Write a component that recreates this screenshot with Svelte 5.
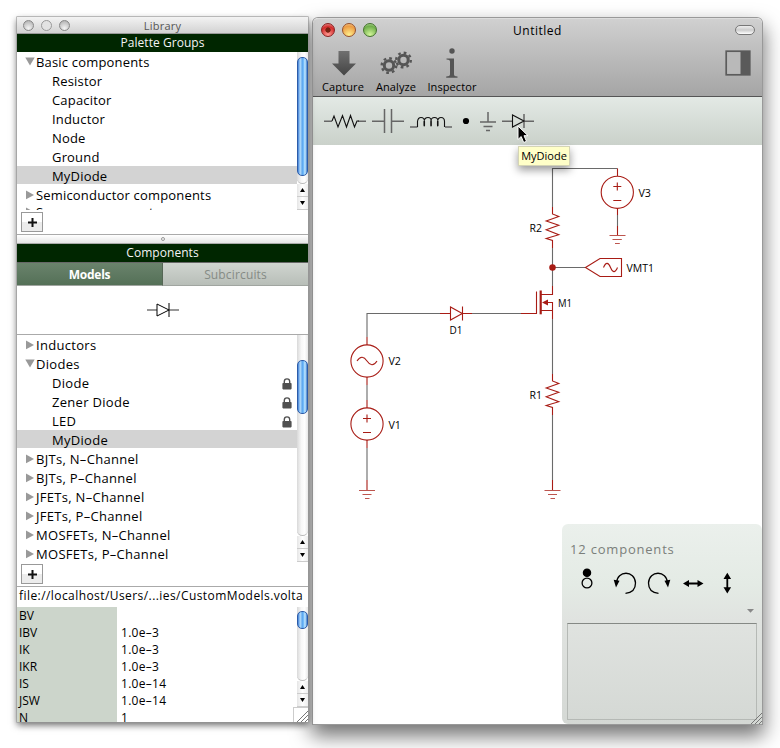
<script>
  const groups = [
    { name: 'Basic components', open: true },
    { name: 'Resistor', child: true },
    { name: 'Capacitor', child: true },
    { name: 'Inductor', child: true },
    { name: 'Node', child: true },
    { name: 'Ground', child: true },
    { name: 'MyDiode', child: true, selected: true },
    { name: 'Semiconductor components' },
    { name: 'Source components', peek: true }
  ];
  const models = [
    { name: 'Inductors' },
    { name: 'Diodes', open: true },
    { name: 'Diode', child: true, locked: true },
    { name: 'Zener Diode', child: true, locked: true },
    { name: 'LED', child: true, locked: true },
    { name: 'MyDiode', child: true, selected: true },
    { name: 'BJTs, N–Channel' },
    { name: 'BJTs, P–Channel' },
    { name: 'JFETs, N–Channel' },
    { name: 'JFETs, P–Channel' },
    { name: 'MOSFETs, N–Channel' },
    { name: 'MOSFETs, P–Channel' }
  ];
  const params = [
    ['BV', ''],
    ['IBV', '1.0e–3'],
    ['IK', '1.0e–3'],
    ['IKR', '1.0e–3'],
    ['IS', '1.0e–14'],
    ['JSW', '1.0e–14'],
    ['N', '1']
  ];
  const labels = [
    ['V3', 638.5, 197, 12.5],
    ['R2', 529.5, 232, 12.5],
    ['VMT1', 626.5, 272, 27.5],
    ['M1', 558, 307, 14],
    ['D1', 449.5, 334, 13],
    ['V2', 388.5, 365, 12.5],
    ['V1', 388.5, 429, 12.5],
    ['R1', 529.5, 399, 12.5]
  ];
</script>

{#snippet tree(rows)}
  <div class="rows">
    {#each rows as r}
      <div class="row" class:child={r.child} class:selected={r.selected} class:peek={r.peek}>
        {#if !r.child}
          <svg class="tri" width="10" height="10" viewBox="0 0 10 10">
            <path d={r.open ? 'M.3 .5H9.7L5 8.500z' : 'M1 .5V9.300L9 4.900z'} fill="#999" />
          </svg>
        {/if}
        <span>{r.name}</span>
        {#if r.locked}
          <svg class="lock" width="10" height="12" viewBox="0 0 10 12">
            <path d="M2.3 6V3.6a2.7 2.7 0 0 1 5.4 0V6" fill="none" stroke="#505050" stroke-width="1.4" />
            <rect x=".4" y="5" width="9.2" height="6.4" rx=".8" fill="#505050" />
          </svg>
        {/if}
      </div>
    {/each}
  </div>
{/snippet}

{#snippet scroller(top, height)}
  <div class="scroll">
    <div class="track">
      <div class="thumb" style="margin-top:{top}px;height:{height}px"></div>
    </div>
    <div class="arrow"><svg width="5" height="4"><path d="M0 4H5L2.5 0z" /></svg></div>
    <div class="arrow"><svg width="5" height="4"><path d="M0 0H5L2.5 4z" /></svg></div>
  </div>
{/snippet}

{#snippet plus()}
  <button aria-label="Add"><svg width="9" height="9" viewBox="0 0 9 9"><path d="M0 4.500H9M4.500 0V9" stroke="#111" stroke-width="2" /></svg></button>
{/snippet}

{#snippet grip()}
  <svg class="grip" width="12" height="12" viewBox="0 0 12 12" stroke="#777">
    <path d="M1 12L12 1M5 12L12 5M9 12L12 9" />
  </svg>
{/snippet}

<div class="desk">
  <section class="library">
    <div class="ltitle">
      <div class="dots"><i></i><i class="dim"></i><i></i></div>
      <span>Library</span>
    </div>
    <div class="head">Palette Groups</div>
    <div class="pane groups">{@render tree(groups)}{@render scroller(5, 119)}</div>
    <div class="foot">{@render plus()}</div>
    <div class="split"><i></i></div>
    <div class="head">Components</div>
    <div class="tabs">
      <div class="tab on">Models</div>
      <div class="tab">Subcircuits</div>
    </div>
    <div class="preview">
      <svg width="32" height="14" viewBox="0 0 32 14" fill="none">
        <path d="M0 7H10M22 7H32" stroke="#777" stroke-width="1.6" />
        <path d="M10 1V13L22 7z" stroke="#000" /><path d="M22 0V14" stroke="#000" />
      </svg>
    </div>
    <div class="pane models">{@render tree(models)}{@render scroller(25, 54)}</div>
    <div class="foot">{@render plus()}</div>
    <div class="path">file://localhost/Users/...ies/CustomModels.volta</div>
    <div class="pane params">
      <div class="table">
        {#each params as [k, v]}
          <div class="prow"><span class="key">{k}</span><span class="val">{v}</span></div>
        {/each}
      </div>
      <div class="pscroll">
        {@render scroller(4, 18)}
        <div class="corner">{@render grip()}</div>
      </div>
    </div>
  </section>

  <section class="main">
    <header>
      <div class="mtitle">
        <div class="lights"><i class="red"></i><i class="amber"></i><i class="green"></i></div>
        <span class="name">Untitled</span>
        <b class="pill"></b>
      </div>
      <div class="tools">
        <div class="tool capture">
          <svg width="26" height="32" viewBox="0 0 26 32"><defs><linearGradient id="g" x1="0" y1="0" x2="0" y2="1"><stop offset="0" stop-color="#707070" /><stop offset="1" stop-color="#444" /></linearGradient></defs>
            <path d="M8.500 5H19.500V17.500H26L14 29.500L2 17.500H8.500z" fill="url(#g)" /></svg>
          <span>Capture</span>
        </div>
        <div class="tool analyze">
          <svg width="34" height="32" viewBox="0 0 34 32" fill="none" stroke="#555">
            <circle cx="10" cy="19.5" r="4.7" stroke-width="3" />
            <circle cx="10" cy="19.5" r="7.3" stroke-width="2.4" stroke-dasharray="2.7 3.03" />
            <circle cx="24.500" cy="14" r="4.7" stroke-width="3" />
            <circle cx="24.500" cy="14" r="7.3" stroke-width="2.4" stroke-dasharray="2.7 3.03" />
          </svg>
          <span>Analyze</span>
        </div>
        <div class="tool inspect">
          <svg width="14" height="32" viewBox="0 0 14 32" fill="#555">
            <circle cx="7" cy="5" r="2.700" />
            <path d="M1.500 12.500H9V28.500Q9 30.300 12.500 30.500V31.800H1.200V30.500Q5 30.300 5 28.500V15.500Q5 13.800 1.500 13.600z" />
          </svg>
          <span>Inspector</span>
        </div>
        <svg class="side" width="26" height="26" viewBox="0 0 26 26">
          <rect x="1.2" y="1.2" width="23.6" height="23.6" fill="#b9b9b9" stroke="#5c5c5c" stroke-width="1.7" /><path d="M15.5 1H25V25H15.5z" fill="#5a5a5a" />
        </svg>
      </div>
    </header>
    <div class="palette">
      <svg width="449" height="48" viewBox="313 97 449 48" fill="none" stroke="#666" stroke-width="1.5">
        <path d="M324 121.2H332M358 121.2H366" />
        <path d="M332 121L334 116L338 127L342.5 115.5L346.5 127L350.5 115.5L354.5 127L357 121H359" stroke="#111" stroke-width="1.1" />
        <path d="M372 121.2H384.5M391.5 121.2H404M384.5 109V133M391.5 109V133" />
        <path d="M410 127H417.500M445 127H452" />
        <path d="M417.500 127V121.500Q418 117.500 421 117.500Q424.500 117.500 424.500 121.500V125.500Q424 126.500 424 125V121.500Q424.500 117.500 428 117.500Q431.300 117.500 431.300 121.500V125.500Q430.800 126.500 430.800 125V121.500Q431 117.500 434.500 117.500Q438 117.500 438 121.500V125.500Q437.500 126.500 437.500 125V121.500Q438 117.500 441 117.500Q444.500 117.500 444.500 121.500V127" stroke="#111" stroke-width="1.100" />
        <circle cx="466" cy="121" r="3.1" fill="#000" stroke="none" />
        <path d="M488 112V122M480 122H496M483.500 126.500H492.500M486 130.500H490" />
        <path d="M502 121.200H512M524 121.200H534M524 114V128" />
        <path d="M512.500 115V127L524 121z" stroke="#111" stroke-width="1.100" />
      </svg>
    </div>
    <div class="canvas">
      <svg width="449" height="579" viewBox="313 145 449 579" fill="none" stroke="#a81c15" stroke-width="1.1">
        <path stroke="#6a6a6a" d="M552.500 207V168.500H617.500M617.500 215V226M552.500 248V286M552.500 267.500H585M552.500 319V374M552.500 415V480M472 313.500H521M441 313.500H367V337M367 385V400M367 448V480" />
        <path d="M552.500 207V214L558.800 216.500L546.200 221L558.800 225.300L546.200 229.700L558.800 234.700L546.200 238.500L552.500 240.500V248" />
        <path d="M552.500 374V381L558.800 383.500L546.200 388L558.800 392.300L546.200 396.700L558.800 401.700L546.200 405.500L552.500 407.500V415" />
        <circle cx="552.500" cy="267.500" r="2.700" fill="#a81c15" />
        <path d="M585.500 267.500L600 258.500H621.500V276.500H600zM603.500 267.500C606 261.500 608.500 262.500 610.500 267.500S615 273.500 617.500 267.500" />
        <circle cx="617.300" cy="192.300" r="16.100" /><circle cx="367" cy="361" r="16.100" /><circle cx="367" cy="424" r="16.100" />
        <path d="M617.500 168.500V176M617.500 208V215M617.500 226V235M613.300 186.500H621.300M617.300 182.500V190.500M613.300 200.500H621.300" />
        <path d="M367 337V345M367 377V385M367 400V408M367 440V448M367 480V490M363 418.500H371M367 414.500V422.500M363 432.500H371M552.500 480V490" />
        <path d="M357 361C360.500 355.500 364 356.500 367 361S373.500 366.500 377 361" />
        <g stroke="#bd554e">
          <path d="M609.500 235.500H625.500M612.500 239.500H621.800M615 243.500H619.800M359 490.500H375M362.500 494.500H371.500M365 498.500H369.500M544.500 490.500H560.500M548 494.500H557M550.500 498.500H555" />
        </g>
        <path d="M440 313.500H450M462 313.500H472M450.500 307V320L462.300 313.500zM462.500 306.500V320.500" />
        <path d="M521 313.500H536.500V291.500M540 294.500H552.500V286M540 310.500H552.500M547 302.500H552.500V319" />
        <path d="M540.700 290.500V314.300" stroke-width="2.200" />
        <path d="M542 302.500L548 299.500V305.500z" fill="#a81c15" stroke="none" />
        {#each labels as [t, x, y, w]}
          <text {x} {y} textLength={w} lengthAdjust="spacingAndGlyphs">{t}</text>
        {/each}
      </svg>
      <div class="panel">
        <div class="count">12 components</div>
        <svg width="200" height="58" viewBox="562 564 200 58" fill="none" stroke="#000" stroke-width="1.300">
          <circle cx="587" cy="572.700" r="3.600" fill="#000" /><circle cx="587" cy="583" r="4.900" />
          <path d="M616.500 583C617 570 635 570 635.500 583Q635.500 592.500 625.500 593.300" />
          <path d="M613.700 579.800L619.500 580.800L616 587.500z" fill="#000" stroke="none" />
          <path d="M667.500 583C667 570 649 570 648.500 583Q648.500 592.500 658.500 593.300" />
          <path d="M670.300 579.800L664.500 580.800L668 587.500z" fill="#000" stroke="none" />
          <path d="M687 583.500H699M727.300 577V589" stroke-width="1.800" />
          <path d="M683 583.500L689 580V587zM703.500 583.500L697.500 580V587zM727.300 572.700L723.500 579H731.100zM727.300 593.500L723.500 587.200H731.100z" fill="#000" stroke="none" />
          <path d="M747 609H754L750.500 612.800z" fill="#888" stroke="none" />
        </svg>
        <div class="well"></div>
        {@render grip()}
      </div>
    </div>
  </section>

  <div class="tip">MyDiode</div>
  <svg class="cursor" width="14" height="20" viewBox="0 0 14 20"><path d="M1 1V14.500L4.200 11.500L6.700 17.500L9.500 16.300L7 10.700H11z" fill="#000" stroke="#fff" /></svg>
</div>

<style>
  :global(body) { background: #fff; overflow: hidden; }
  .desk { position: relative; width: 780px; height: 748px; overflow: hidden; background: #fff; font: 500 13px/18px 'Open Sans', 'Noto Sans', sans-serif; color: #000; }
  .desk *, .desk { box-sizing: border-box; }
  .library { position: absolute; left: 17px; top: 17px; width: 291px; height: 705px; background: #fff; display: flex; flex-direction: column; box-shadow: 0 0 0 .6px #999, 0 3px 7px rgba(0,0,0,.6); z-index: 1; }
  .library > * { flex: none; }
  .ltitle { height: 17px; display: grid; place-items: center; background: linear-gradient(#f3f3f3, #d2d2d2); border-bottom: 1px solid #999; font-size: 11px; line-height: 15px; color: #555; letter-spacing: .2px; }
  .ltitle > * { grid-area: 1 / 1; }
  .ltitle span { padding-top: 1px; }
  .dots { justify-self: start; display: flex; gap: 7px; padding-left: 6px; }
  .dots i { width: 11px; height: 11px; border-radius: 50%; border: 1.5px solid #888; background: radial-gradient(circle at 50% 80%, #f4f4f4, #aaa); }
  .dots .dim { background: #e2e2e2; border: 1px solid #999; }
  .head { height: 18px; background: #002600; color: #f4f4f4; text-align: center; font-size: 12px; line-height: 18px; letter-spacing: .05px; }
  .pane { display: flex; overflow: hidden; }
  .groups { height: 158px; }
  .models { height: 227px; }
  .rows, .table { flex: 1; overflow: hidden; }
  .row { display: flex; align-items: center; height: 18px; margin-bottom: 1px; padding-left: 8px; letter-spacing: .18px; white-space: pre; line-height: 20px; }
  .models .row { letter-spacing: .3px; }
  .row span { flex: 1; padding-top: 2px; }
  .peek { margin-top: -2px; }
  .child { padding-left: 35px; }
  .selected { background: #d3d3d3; }
  .tri { margin: 2px 1px 0 0; }
  .lock { margin: 3px 5px 0 0; }
  .scroll { width: 11px; display: flex; flex-direction: column; flex: 1; }
  .groups > :global(.scroll), .models > :global(.scroll) { flex: none; }
  .track { flex: 1; display: flow-root; background: linear-gradient(90deg, #d9d9d9, #f8f8f8 40%, #fff 70%, #e8e8e8); border-radius: 0 0 6px 6px; border-bottom: 1px solid #bbb; }
  .thumb { border-radius: 5px; border: 1px solid #2d5ca8; background: linear-gradient(90deg, #3f80d8, #b5dcfa 25%, #5ca6ee 48%, #6eb9fa 60%, #c5e9ff 78%, #4080d0); }
  .arrow { height: 13px; display: grid; place-items: center; border-bottom: 1px solid #ccc; background: linear-gradient(90deg, #e5e5e5, #fff, #eee); }
  .foot { height: 25px; padding: 2px 0 0 4px; border-bottom: 1px solid #aaa; }
  button { display: grid; place-items: center; width: 22px; height: 20px; padding: 0; border: 1px solid #999; background: linear-gradient(#fff 50%, #ececec 50%); }
  button svg { display: block; }
  .split { height: 9px; background: linear-gradient(#fff, #e6e6e6); display: grid; place-items: center; border-bottom: 1px solid #aaa; }
  .split i { width: 4px; height: 4px; border-radius: 50%; border: 1px solid #999; }
  .tabs { display: flex; height: 24px; border-top: 1px solid #666; }
  .tab { flex: 1; text-align: center; line-height: 24px; font-size: 12px; letter-spacing: .15px; color: #858b85; background: linear-gradient(#d0d5d0, #b8beb8); border-bottom: 1px solid #a0a5a0; }
  .tab.on { color: #fff; font-weight: 700; letter-spacing: -.25px; background: linear-gradient(#6a836c, #547057); border-right: 1px solid #556655; }
  .preview { height: 49px; display: grid; place-items: center; border-bottom: 1px solid #aaa; }
  .path { height: 20px; font-size: 12px; line-height: 18px; padding-left: 2px; white-space: nowrap; letter-spacing: .43px; }
  .params { height: 115px; }
  .prow { display: flex; height: 17px; font-size: 12px; line-height: 18px; }
  .key { width: 100px; padding-left: 2px; background: #ccd5cb; }
  .val { padding-left: 4px; letter-spacing: .3px; }
  .pscroll { width: 11px; display: flex; flex-direction: column; }
  .corner { height: 15px; width: 15px; margin-left: -4px; display: grid; place-items: end; background: #fff; border: 1px solid #ccc; border-width: 1px 0 0 1px; }

  .main { position: absolute; left: 313px; top: 18px; width: 449px; height: 706px; border-radius: 5px 5px 0 0; background: #fff; display: flex; flex-direction: column; box-shadow: 0 0 0 1px #999, 0 10px 20px 2px rgba(0,0,0,.55); }
  header { height: 79px; border-radius: 5px 5px 0 0; background: linear-gradient(#d0d0d0, #a5a5a5); border-top: 1px solid #ddd; border-bottom: 1px solid #555; }
  .mtitle { display: grid; height: 22px; place-items: center; grid-template-columns: 1fr; font-size: 12px; }
  .mtitle > * { grid-area: 1 / 1; }
  .name { padding-top: 1px; letter-spacing: .5px; }
  .lights { justify-self: start; display: flex; gap: 7px; padding-left: 8px; }
  .lights i { width: 14px; height: 14px; border-radius: 50%; border: 1px solid; }
  .lights .red { border-color: #822; background: radial-gradient(circle, #721 0 2.3px, transparent 3px), radial-gradient(circle at 50% 90%, #ff9a92, #d32b2b 65%, #e9a6a0); }
  .lights .amber { border-color: #96502a; background: radial-gradient(circle at 50% 90%, #fff08d, #ec9b43 70%, #f8d7a5); }
  .lights .green { border-color: #44722d; background: radial-gradient(circle at 50% 90%, #d4f79b, #6fae4a 70%, #c6e3ac); }
  .pill { justify-self: end; margin-right: 7px; width: 20px; height: 10px; border: 1px solid #777; border-radius: 5px; background: linear-gradient(#eee, #ccc 50%, #fff); }
  .tools { display: flex; height: 55px; padding-left: 8px; }
  .tool { display: flex; flex-direction: column; align-items: center; margin-top: 5px; font-size: 11px; line-height: 14px; letter-spacing: .1px; }
  .tool svg { display: block; }
  .tool span { margin-top: 2px; }
  .capture { width: 44px; }
  .analyze { width: 44px; margin-left: 9px; }
  .inspect { width: 50px; margin-left: 9px; }
  .side { margin: 9px 11px 0 auto; }
  .palette { height: 48px; background: linear-gradient(#e3e9e5, #cad1ca); }
  .palette svg, .canvas > svg { display: block; }
  .canvas { display: grid; height: 579px; }
  .canvas > * { grid-area: 1 / 1; }
  text { font: 500 11px 'Open Sans', sans-serif; fill: #000; stroke: none; }
  .panel { place-self: end; position: relative; width: 200px; height: 200px; border-radius: 6px 6px 0 6px; background: linear-gradient(#ebf0ec, #e4ebe5 30%, #e0e3e0 48%, #d4d8d4); display: flex; flex-direction: column; padding-top: 14px; }
  .count { height: 26px; line-height: 22px; padding-left: 8px; color: #7b7f7b; letter-spacing: .8px; }
  .panel > svg { flex: none; }
  .well { margin: 1px 5px 0; height: 97px; border: 1px solid #b5b9b5; border-top-color: #858985; }
  .panel > :global(.grip) { position: absolute; right: 0; bottom: 0; }
  .tip { position: absolute; left: 518px; top: 146px; width: 52px; height: 20px; background: #ffffc8; border: 1px solid #d4d4b5; font-size: 11px; line-height: 18px; text-align: center; box-shadow: 0 4px 8px rgba(0,0,0,.4); z-index: 2; white-space: nowrap; }
  .cursor { position: absolute; left: 517px; top: 125px; z-index: 3; }
</style>
